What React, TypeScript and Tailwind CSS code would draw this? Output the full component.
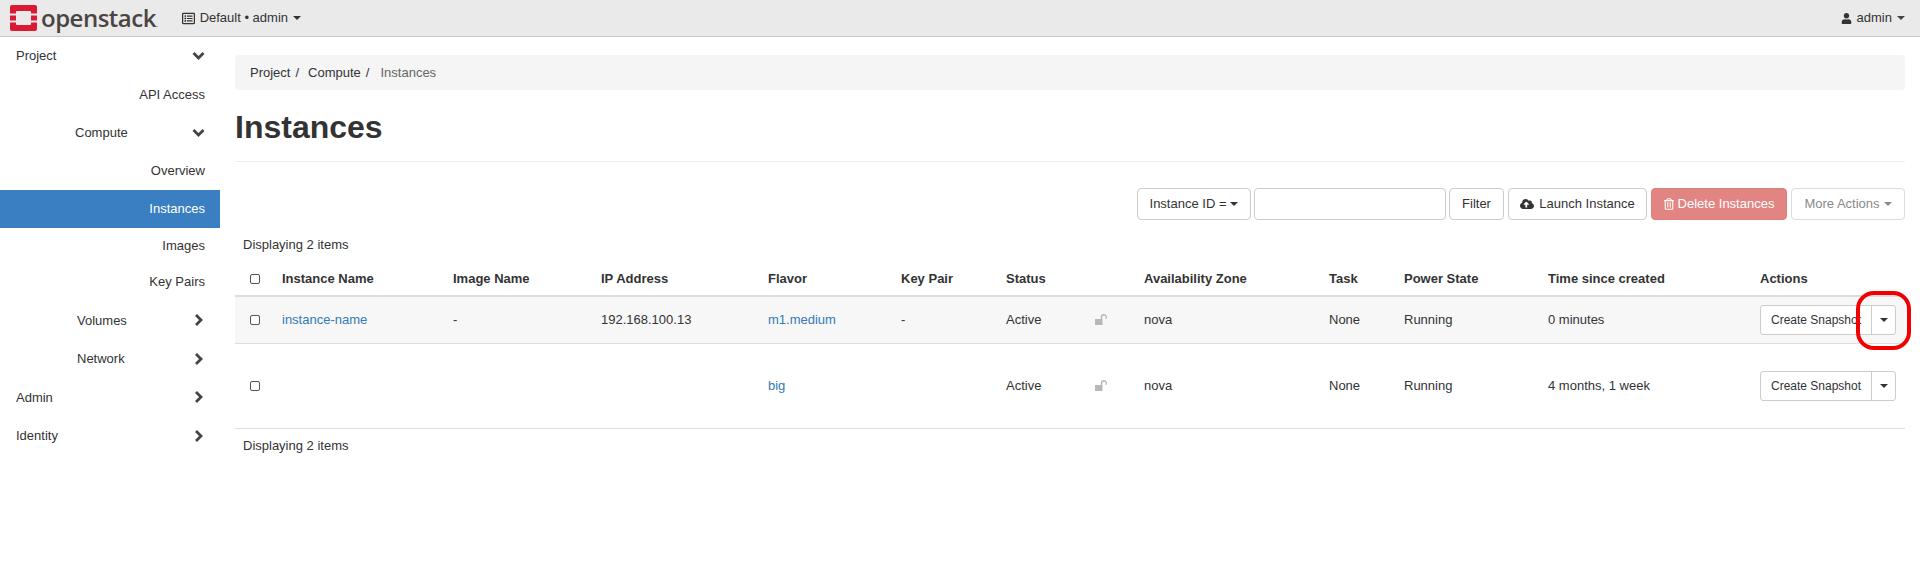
import React from "react";
import { FaUser, FaCloudUploadAlt, FaRegTrashAlt, FaRegListAlt } from "react-icons/fa";

function Caret({ className = "" }: { className?: string }) {
  return <span className={"inline-block w-0 h-0 border-x-[4px] border-x-transparent border-t-[4px] border-t-current " + className} />;
}

function Logo() {
  return (
    <svg width="27" height="26" viewBox="0 0 27 26" className="shrink-0">
      <path fill="#da1a32" d="M2 0H25a2 2 0 0 1 2 2V8.5H21V7a1 1 0 0 0-1-1H7a1 1 0 0 0-1 1V8.5H0V2a2 2 0 0 1 2-2ZM0 10.5H6V15.5H0ZM21 10.5H27V15.5H21ZM0 17.5H6V19a1 1 0 0 0 1 1H20a1 1 0 0 0 1-1V17.5H27V24a2 2 0 0 1-2 2H2a2 2 0 0 1-2-2Z" />
    </svg>
  );
}

function Down() {
  return (
    <svg width="13" height="10" viewBox="0 0 13 10" className="shrink-0">
      <path d="M1.5 2L6.5 7L11.5 2" fill="none" stroke="#444" strokeWidth="2.8" />
    </svg>
  );
}

function Right() {
  return (
    <svg width="13" height="12" viewBox="0 0 13 12" className="shrink-0">
      <path d="M4 1L9 6L4 11" fill="none" stroke="#444" strokeWidth="2.8" />
    </svg>
  );
}

function OpenLock() {
  return (
    <svg width="13" height="11" viewBox="0 0 13 11" className="shrink-0">
      <rect x="0" y="5" width="7.5" height="6" fill="#b8b8b8" />
      <path d="M6.5 5V3.2a2.4 2.4 0 0 1 4.8 0V4.8" fill="none" stroke="#b8b8b8" strokeWidth="1.4" />
    </svg>
  );
}

const navRow = "h-[38.5px] flex items-center";

function Nav() {
  return (
    <nav className="w-[220px] shrink-0 text-[13px] text-[#333]">
      <div className="h-[38px] flex items-center pl-4 pr-[15px] justify-between">
        <span>Project</span>
        <Down />
      </div>
      <div className={navRow + " justify-end pr-[15px]"}>API Access</div>
      <div className={navRow + " pl-[75px] pr-[15px] justify-between"}>
        <span>Compute</span>
        <Down />
      </div>
      <div className="h-[38px] flex items-center justify-end pr-[15px]">Overview</div>
      <div className="h-[38px] flex items-center justify-end pr-[15px] bg-[#3a7fc1] text-white">Instances</div>
      <div className="h-[35px] flex items-center justify-end pr-[15px]">Images</div>
      <div className="h-[38px] flex items-center justify-end pr-[15px]">Key Pairs</div>
      <div className={navRow + " pl-[77px] pr-[15px] justify-between"}>
        <span>Volumes</span>
        <Right />
      </div>
      <div className={navRow + " pl-[77px] pr-[15px] justify-between"}>
        <span>Network</span>
        <Right />
      </div>
      <div className={navRow + " pl-4 pr-[15px] justify-between"}>
        <span>Admin</span>
        <Right />
      </div>
      <div className={navRow + " pl-4 pr-[15px] justify-between"}>
        <span>Identity</span>
        <Right />
      </div>
    </nav>
  );
}

function Check() {
  return <span className="block w-[10px] h-[10px] ml-[7px] rounded-[2px] border border-[#555] bg-white" />;
}

function ActionButton({ ring = false }: { ring?: boolean }) {
  return (
    <div className="relative flex w-[136px] h-[30px] text-[12px] text-[#333] border border-[#ccc] rounded-[3px] bg-white">
      <span className="w-[111px] flex items-center justify-center border-r border-[#ccc]">Create Snapshot</span>
      <span className="flex-1 flex items-center justify-center"><Caret /></span>
      {ring && <span className="absolute left-[95px] -top-[15px] w-[55px] h-[59px] rounded-[18px] border-[4px] border-[#f00000]" />}
    </div>
  );
}

const headers = ["", "Instance Name", "Image Name", "IP Address", "Flavor", "Key Pair", "Status", "", "Availability Zone", "Task", "Power State", "Time since created", "Actions"];

function Row({ name, image, ip, flavor, keyPair, time, bg, h, ring }: { name: string; image: string; ip: string; flavor: string; keyPair: string; time: string; bg: string; h: string; ring?: boolean }) {
  const td = "px-2 align-middle border-b border-[#ddd]";
  return (
    <tr className={bg + " " + h}>
      <td className={td}><Check /></td>
      <td className={td}><a className="text-[#337ab7]">{name}</a></td>
      <td className={td}>{image}</td>
      <td className={td}>{ip}</td>
      <td className={td}><a className="text-[#337ab7]">{flavor}</a></td>
      <td className={td}>{keyPair}</td>
      <td className={td}>Active</td>
      <td className={td}><OpenLock /></td>
      <td className={td}>nova</td>
      <td className={td}>None</td>
      <td className={td}>Running</td>
      <td className={td}>{time}</td>
      <td className={td}><ActionButton ring={ring} /></td>
    </tr>
  );
}

export default function App() {
  const btn = "h-[32px] flex items-center justify-center rounded-[4px] border text-[13px]";
  return (
    <div className="min-h-[561px] bg-white text-[13px] text-[#333] font-['Liberation_Sans',Arial,sans-serif]">
      <header className="h-[37px] bg-[#eaeaea] border-b border-[#c8c8c8] flex items-center justify-between">
        <div className="flex items-center">
          <div className="ml-[10px] flex"><Logo /></div>
          <span className="ml-[4px] text-[24px] leading-none tracking-[-0.5px] font-semibold text-[#4a4543] font-['Open_Sans',sans-serif]">openstack<span className="text-[8px] text-[#888]">.</span></span>
          <FaRegListAlt className="ml-[24px] w-[13px] h-[13px] text-[#333]" />
          <span className="ml-[5px]">Default • admin</span>
          <Caret className="ml-[5px]" />
        </div>
        <div className="flex items-center pr-[15px]">
          <FaUser className="w-[11px] h-[11px]" />
          <span className="ml-[5px]">admin</span>
          <Caret className="ml-[5px] text-[#444]" />
        </div>
      </header>
      <div className="flex">
        <Nav />
        <main className="w-[1670px] ml-[15px]">
          <div className="mt-[18px] h-[35px] flex items-center pl-[15px] bg-[#f5f5f5] rounded-[4px]">
            <span>Project</span><span className="ml-[5px] mr-[9px]">/</span>
            <span>Compute</span><span className="ml-[5px] mr-[11px]">/</span>
            <span className="text-[#666]">Instances</span>
          </div>
          <h1 className="mt-[19px] text-[32px] leading-[36px] font-bold text-[#333]">Instances</h1>
          <div className="mt-[16px] border-t border-[#eee]" />
          <div className="mt-[26px] flex justify-end">
            <div className={btn + " w-[114px] border-[#ccc] gap-[4px]"}>Instance ID = <Caret /></div>
            <div className="ml-[3px] w-[192px] h-[32px] border border-[#ccc] rounded-[4px]" />
            <div className={btn + " ml-[3px] w-[55px] border-[#ccc]"}>Filter</div>
            <div className={btn + " ml-[4px] w-[139px] border-[#ccc] gap-[5px]"}><FaCloudUploadAlt className="w-[14px] h-[14px]" />Launch Instance</div>
            <div className={btn + " ml-[4px] w-[136px] border-[#dd7f7c] bg-[#e28582] text-white gap-[4px]"}><FaRegTrashAlt className="w-[10px] h-[12px]" />Delete Instances</div>
            <div className={btn + " ml-[4px] w-[114px] border-[#dcdcdc] text-[#8a8a8a] gap-[4px]"}>More Actions <Caret /></div>
          </div>
          <div className="mt-[17px] pl-2 h-[16px] leading-[16px]">Displaying 2 items</div>
          <table className="mt-[10px] w-full table-fixed border-collapse">
            <colgroup>
              <col className="w-[39px]" /><col className="w-[171px]" /><col className="w-[148px]" /><col className="w-[167px]" />
              <col className="w-[133px]" /><col className="w-[105px]" /><col className="w-[89px]" /><col className="w-[49px]" />
              <col className="w-[185px]" /><col className="w-[75px]" /><col className="w-[144px]" /><col className="w-[212px]" /><col className="w-[153px]" />
            </colgroup>
            <thead>
              <tr className="h-[33px]">
                {headers.map((t, i) => (
                  <th key={i} className="px-2 text-left font-bold border-b-2 border-[#ddd] align-middle">{i === 0 ? <Check /> : t}</th>
                ))}
              </tr>
            </thead>
            <tbody>
              <Row name="instance-name" image="-" ip="192.168.100.13" flavor="m1.medium" keyPair="-" time="0 minutes" bg="bg-[#f7f7f7]" h="h-[47px]" ring />
              <Row name="" image="" ip="" flavor="big" keyPair="" time="4 months, 1 week" bg="bg-white" h="h-[85px]" />
            </tbody>
          </table>
          <div className="mt-[9px] pl-2 h-[16px] leading-[16px]">Displaying 2 items</div>
        </main>
      </div>
    </div>
  );
}
